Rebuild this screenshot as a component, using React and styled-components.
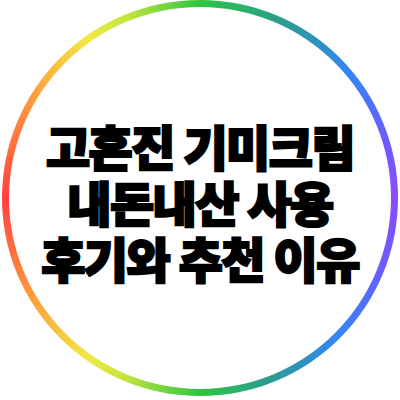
import React from "react";
import styled, { createGlobalStyle } from "styled-components";

const GlobalStyle = createGlobalStyle`
    html, body {
        margin:0;
        padding:0;
        background:#ffffff;
    }
`

const Page = styled.div`
    width:400px;
    height:400px;
    display:flex;
    align-items:flex-start;
    justify-content:center;
    background:#ffffff;
`

const Ring = styled.div`
    width:396px;
    height:396px;
    border-radius:50%;
    padding:7px;
    box-sizing:border-box;
    background:conic-gradient(
        from 0deg,
        #2ec540 0deg,
        #2a9d8f 25deg,
        #3385f8 50deg,
        #6a5cff 72deg,
        #8a4cff 90deg,
        #6a5cff 110deg,
        #3385f8 135deg,
        #2a9d8f 160deg,
        #2ec540 180deg,
        #c4e63c 203deg,
        #f2e845 215deg,
        #ff9a3c 240deg,
        #ff4040 270deg,
        #ff9a3c 300deg,
        #f2e845 325deg,
        #c4e63c 338deg,
        #2ec540 360deg
    );
    display:flex;
`

const Inner = styled.div`
    flex:1;
    border-radius:50%;
    background:#ffffff;
    display:flex;
    flex-direction:column;
    align-items:center;
    justify-content:center;
    padding-top:6px;
`

const Line = styled.div`
    font-family:"Noto Sans CJK KR", "Noto Sans", sans-serif;
    font-weight:900;
    font-size:48px;
    letter-spacing:-1.5px;
    line-height:56px;
    height:56px;
    color:#000000;
    -webkit-text-stroke:2.2px #000000;
    white-space:nowrap;
`

const lines = ["고혼진 기미크림", "내돈내산 사용", "후기와 추천 이유"];

const App = () => {
    return (
        <>
            <GlobalStyle />
            <Page>
                <Ring>
                    <Inner>
                        {lines.map((text) => (
                            <Line key={text}>{text}</Line>
                        ))}
                    </Inner>
                </Ring>
            </Page>
        </>
    )
}

export default App;
